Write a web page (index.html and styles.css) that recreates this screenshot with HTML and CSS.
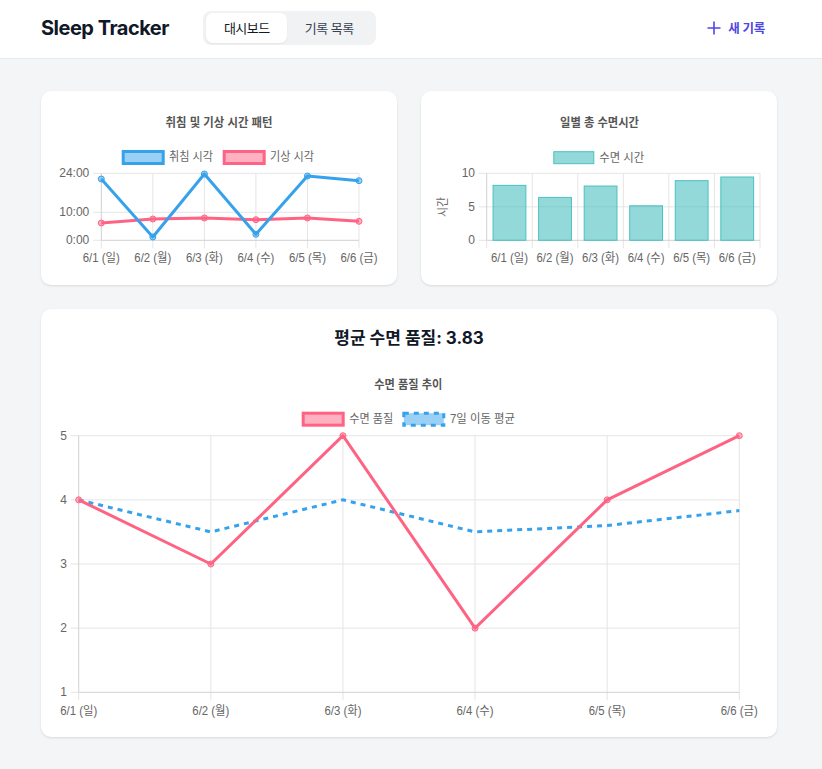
FILE: index.html
```html
<!DOCTYPE html>
<html lang="ko">
<head>
<meta charset="utf-8">
<title>Sleep Tracker</title>
<link rel="stylesheet" href="styles.css">
</head>
<body>
<header class="topbar">
  <div class="topbar-inner">
    <h1 class="brand">Sleep Tracker</h1>
    <nav class="tabs">
      <button class="tab active">대시보드</button>
      <button class="tab">기록 목록</button>
    </nav>
    <button class="new-btn">
      <svg class="plus" width="14" height="14" viewBox="0 0 14 14"><path d="M7 0.5V13.5M0.5 7H13.5" stroke="currentColor" stroke-width="1.6" fill="none"/></svg>
      <span>새 기록</span>
    </button>
  </div>
</header>

<main class="container">
  <div class="chart-row">
    <section class="card small">
      <svg class="chart" width="356" height="194" viewBox="0 0 356 194">
        <text class="ctitle" x="178" y="36" text-anchor="middle" textLength="107" lengthAdjust="spacingAndGlyphs">취침 및 기상 시간 패턴</text>
        <rect x="82.2" y="60.5" width="40" height="12" fill="rgba(54,162,235,0.5)" stroke="rgb(54,162,235)" stroke-width="3"/>
        <text class="lbl" x="128" y="70" textLength="44" lengthAdjust="spacingAndGlyphs">취침 시각</text>
        <rect x="183.2" y="60.5" width="40" height="12" fill="rgba(255,99,132,0.5)" stroke="rgb(255,99,132)" stroke-width="3"/>
        <text class="lbl" x="229" y="70" textLength="44" lengthAdjust="spacingAndGlyphs">기상 시각</text>
        <g class="grid">
          <line x1="52.3" y1="82.3" x2="318" y2="82.3"/>
          <line x1="52.3" y1="121.3" x2="318" y2="121.3"/>
          <line x1="111.84" y1="82.3" x2="111.84" y2="157.3"/>
          <line x1="163.38" y1="82.3" x2="163.38" y2="157.3"/>
          <line x1="214.92" y1="82.3" x2="214.92" y2="157.3"/>
          <line x1="266.46" y1="82.3" x2="266.46" y2="157.3"/>
          <line x1="318" y1="82.3" x2="318" y2="157.3"/>
          <line x1="52.3" y1="149.3" x2="60.3" y2="149.3"/>
          <line x1="60.3" y1="149.3" x2="60.3" y2="157.3"/>
        </g>
        <g class="axis">
          <line x1="60.3" y1="82.3" x2="60.3" y2="149.3"/>
          <line x1="60.3" y1="149.3" x2="318" y2="149.3"/>
        </g>
        <g class="tick" text-anchor="end">
          <text x="48.3" y="86.3">24:00</text>
          <text x="48.3" y="125.3">10:00</text>
          <text x="48.3" y="153.3">0:00</text>
        </g>
        <g class="tick" text-anchor="middle">
          <text x="60.3" y="171" textLength="37" lengthAdjust="spacingAndGlyphs">6/1 (일)</text>
          <text x="111.84" y="171" textLength="37" lengthAdjust="spacingAndGlyphs">6/2 (월)</text>
          <text x="163.38" y="171" textLength="37" lengthAdjust="spacingAndGlyphs">6/3 (화)</text>
          <text x="214.92" y="171" textLength="37" lengthAdjust="spacingAndGlyphs">6/4 (수)</text>
          <text x="266.46" y="171" textLength="37" lengthAdjust="spacingAndGlyphs">6/5 (목)</text>
          <text x="318" y="171" textLength="37" lengthAdjust="spacingAndGlyphs">6/6 (금)</text>
        </g>
        <polyline class="line pink" points="60.3,132 111.84,128 163.38,127 214.92,128.7 266.46,127 318,130.3"/>
        <g class="pts pink-pt">
          <circle cx="60.3" cy="132" r="3"/><circle cx="111.84" cy="128" r="3"/><circle cx="163.38" cy="127" r="3"/>
          <circle cx="214.92" cy="128.7" r="3"/><circle cx="266.46" cy="127" r="3"/><circle cx="318" cy="130.3" r="3"/>
        </g>
        <polyline class="line blue" points="60.3,88 111.84,146 163.38,83 214.92,143.3 266.46,85 318,89.7"/>
        <g class="pts blue-pt">
          <circle cx="60.3" cy="88" r="3"/><circle cx="111.84" cy="146" r="3"/><circle cx="163.38" cy="83" r="3"/>
          <circle cx="214.92" cy="143.3" r="3"/><circle cx="266.46" cy="85" r="3"/><circle cx="318" cy="89.7" r="3"/>
        </g>
      </svg>
    </section>

    <section class="card small">
      <svg class="chart" width="356" height="194" viewBox="0 0 356 194">
        <text class="ctitle" x="178.5" y="36" text-anchor="middle" textLength="79" lengthAdjust="spacingAndGlyphs">일별 총 수면시간</text>
        <rect x="132.8" y="60.7" width="40" height="12" fill="rgba(75,192,192,0.6)" stroke="rgb(75,192,192)" stroke-width="1"/>
        <text class="lbl" x="178.3" y="70.5" textLength="45" lengthAdjust="spacingAndGlyphs">수면 시간</text>
        <g class="grid">
          <line x1="57.7" y1="82.3" x2="339" y2="82.3"/>
          <line x1="57.7" y1="115.8" x2="339" y2="115.8"/>
          <line x1="57.7" y1="149.3" x2="65.7" y2="149.3"/>
          <line x1="65.7" y1="149.3" x2="65.7" y2="157.3"/>
          <line x1="111.25" y1="82.3" x2="111.25" y2="157.3"/>
          <line x1="156.8" y1="82.3" x2="156.8" y2="157.3"/>
          <line x1="202.35" y1="82.3" x2="202.35" y2="157.3"/>
          <line x1="247.9" y1="82.3" x2="247.9" y2="157.3"/>
          <line x1="293.45" y1="82.3" x2="293.45" y2="157.3"/>
          <line x1="339" y1="82.3" x2="339" y2="157.3"/>
        </g>
        <g class="axis">
          <line x1="65.7" y1="82.3" x2="65.7" y2="149.3"/>
          <line x1="65.7" y1="149.3" x2="339" y2="149.3"/>
        </g>
        <g class="tick" text-anchor="end">
          <text x="54" y="86.3">10</text>
          <text x="54" y="119.8">5</text>
          <text x="54" y="153.3">0</text>
        </g>
        <text class="tick" x="0" y="0" text-anchor="middle" transform="translate(26 116) rotate(-90)" textLength="20" lengthAdjust="spacingAndGlyphs">시간</text>
        <g class="bars">
          <rect x="72.08" y="94.36" width="32.8" height="54.94"/>
          <rect x="117.63" y="106.42" width="32.8" height="42.88"/>
          <rect x="163.18" y="95.03" width="32.8" height="54.27"/>
          <rect x="208.73" y="114.8" width="32.8" height="34.5"/>
          <rect x="254.28" y="89.67" width="32.8" height="59.63"/>
          <rect x="299.83" y="86" width="32.8" height="63.3"/>
        </g>
        <g class="tick" text-anchor="middle">
          <text x="88.48" y="171" textLength="37" lengthAdjust="spacingAndGlyphs">6/1 (일)</text>
          <text x="134.03" y="171" textLength="37" lengthAdjust="spacingAndGlyphs">6/2 (월)</text>
          <text x="179.58" y="171" textLength="37" lengthAdjust="spacingAndGlyphs">6/3 (화)</text>
          <text x="225.13" y="171" textLength="37" lengthAdjust="spacingAndGlyphs">6/4 (수)</text>
          <text x="270.68" y="171" textLength="37" lengthAdjust="spacingAndGlyphs">6/5 (목)</text>
          <text x="316.23" y="171" textLength="37" lengthAdjust="spacingAndGlyphs">6/6 (금)</text>
        </g>
      </svg>
    </section>
  </div>

  <section class="card wide">
    <h2 class="avg">평균 수면 품질: 3.83</h2>
    <svg class="chart" width="736" height="386" viewBox="0 0 736 386">
      <text class="ctitle" x="367.3" y="38" text-anchor="middle" textLength="68" lengthAdjust="spacingAndGlyphs">수면 품질 추이</text>
      <rect x="262.2" y="62.2" width="40" height="12" fill="rgba(255,99,132,0.5)" stroke="rgb(255,99,132)" stroke-width="3"/>
      <text class="lbl" x="308.3" y="72" textLength="44" lengthAdjust="spacingAndGlyphs">수면 품질</text>
      <rect x="362.8" y="62.2" width="40" height="12" fill="rgba(54,162,235,0.5)" stroke="rgb(54,162,235)" stroke-width="3" stroke-dasharray="5 5"/>
      <text class="lbl" x="409" y="72" textLength="65" lengthAdjust="spacingAndGlyphs">7일 이동 평균</text>
      <g class="grid">
        <line x1="29.7" y1="84.7" x2="698.3" y2="84.7"/>
        <line x1="29.7" y1="148.85" x2="698.3" y2="148.85"/>
        <line x1="29.7" y1="213" x2="698.3" y2="213"/>
        <line x1="29.7" y1="277.15" x2="698.3" y2="277.15"/>
        <line x1="29.7" y1="341.3" x2="37.7" y2="341.3"/>
        <line x1="37.7" y1="341.3" x2="37.7" y2="349.3"/>
        <line x1="169.82" y1="84.7" x2="169.82" y2="349.3"/>
        <line x1="301.94" y1="84.7" x2="301.94" y2="349.3"/>
        <line x1="434.06" y1="84.7" x2="434.06" y2="349.3"/>
        <line x1="566.18" y1="84.7" x2="566.18" y2="349.3"/>
        <line x1="698.3" y1="84.7" x2="698.3" y2="349.3"/>
      </g>
      <g class="axis">
        <line x1="37.7" y1="84.7" x2="37.7" y2="341.3"/>
        <line x1="37.7" y1="341.3" x2="698.3" y2="341.3"/>
      </g>
      <g class="tick" text-anchor="end">
        <text x="26" y="88.7">5</text>
        <text x="26" y="152.85">4</text>
        <text x="26" y="217">3</text>
        <text x="26" y="281.15">2</text>
        <text x="26" y="345.3">1</text>
      </g>
      <g class="tick" text-anchor="middle">
        <text x="37.7" y="364" textLength="37" lengthAdjust="spacingAndGlyphs">6/1 (일)</text>
        <text x="169.82" y="364" textLength="37" lengthAdjust="spacingAndGlyphs">6/2 (월)</text>
        <text x="301.94" y="364" textLength="37" lengthAdjust="spacingAndGlyphs">6/3 (화)</text>
        <text x="434.06" y="364" textLength="37" lengthAdjust="spacingAndGlyphs">6/4 (수)</text>
        <text x="566.18" y="364" textLength="37" lengthAdjust="spacingAndGlyphs">6/5 (목)</text>
        <text x="698.3" y="364" textLength="37" lengthAdjust="spacingAndGlyphs">6/6 (금)</text>
      </g>
      <polyline class="line blue dashed" points="37.7,148.85 169.82,180.9 301.94,148.85 434.06,180.9 566.18,174.5 698.3,159.6"/>
      <polyline class="line pink" points="37.7,148.85 169.82,213 301.94,84.7 434.06,277.15 566.18,148.85 698.3,84.7"/>
      <g class="pts pink-pt">
        <circle cx="37.7" cy="148.85" r="3"/><circle cx="169.82" cy="213" r="3"/><circle cx="301.94" cy="84.7" r="3"/>
        <circle cx="434.06" cy="277.15" r="3"/><circle cx="566.18" cy="148.85" r="3"/><circle cx="698.3" cy="84.7" r="3"/>
      </g>
    </svg>
  </section>
</main>
</body>
</html>
```

FILE: styles.css
```css
* { box-sizing: border-box; }

html, body {
  margin: 0;
  padding: 0;
}

body {
  background: #f4f5f7;
  font-family: Inter, "Noto Sans CJK KR", sans-serif;
  color: #111827;
}

.topbar {
  background: #ffffff;
  border-bottom: 1px solid #e8e9ec;
  padding-bottom: 3px;
}

.topbar-inner {
  width: 736px;
  margin-left: 41px;
  height: 55px;
  display: flex;
  align-items: center;
}

.brand {
  margin: 0;
  font-size: 20px;
  font-weight: 700;
  letter-spacing: -0.5px;
  color: #111827;
  line-height: 1;
}

.tabs {
  margin-left: 34px;
  display: flex;
  background: #f1f2f4;
  border-radius: 8px;
  padding: 2px 3px 2px 3px;
}

.tab {
  border: 0;
  background: transparent;
  font-family: "Noto Sans CJK KR", sans-serif;
  font-size: 13px;
  letter-spacing: -0.5px;
  color: #374151;
  height: 30px;
  padding: 0 19px 0 18px;
  border-radius: 7px;
  cursor: pointer;
}

.tab.active {
  background: #ffffff;
  color: #111827;
  padding: 0 17px 0 18px;
  box-shadow: 0 1px 2px rgba(0, 0, 0, 0.06);
}

.new-btn {
  margin-left: auto;
  border: 0;
  background: transparent;
  color: #4f46e5;
  display: flex;
  align-items: center;
  gap: 7px;
  padding: 0 12px 0 0;
  font-family: "Noto Sans CJK KR", sans-serif;
  font-size: 12.5px;
  font-weight: 600;
  letter-spacing: -0.3px;
  cursor: pointer;
}

.plus { display: block; }

.container {
  width: 736px;
  margin-left: 41px;
  padding-top: 32px;
  padding-bottom: 32px;
}

.chart-row {
  display: grid;
  grid-template-columns: 356px 356px;
  gap: 24px;
}

.card {
  background: #ffffff;
  border-radius: 10px;
  box-shadow: 0 1px 3px rgba(0, 0, 0, 0.08), 0 1px 2px rgba(0, 0, 0, 0.04);
  overflow: hidden;
}

.card.small { height: 194px; }

.card.wide {
  margin-top: 24px;
  height: 428px;
  padding-top: 16px;
}

.avg {
  margin: 0;
  text-align: center;
  font-size: 17px;
  line-height: 26px;
  font-weight: 700;
  color: #111827;
}

.chart { display: block; }

.chart text {
  font-family: "Liberation Sans", "Noto Sans CJK KR", sans-serif;
  font-size: 12px;
  fill: #666666;
}

.chart .ctitle {
  font-weight: 700;
  fill: #555555;
}

.grid line {
  stroke: #e5e5e5;
  stroke-width: 1;
}

.axis line {
  stroke: #d0d0d0;
  stroke-width: 1;
}

.line {
  fill: none;
  stroke-width: 3;
  stroke-linejoin: round;
}

.line.blue { stroke: rgb(54, 162, 235); }
.line.pink { stroke: rgb(255, 99, 132); }
.line.dashed { stroke-dasharray: 5 5; stroke-linejoin: miter; }

.pts circle { stroke-width: 1; }
.blue-pt circle { fill: rgba(54, 162, 235, 0.5); stroke: rgb(54, 162, 235); }
.pink-pt circle { fill: rgba(255, 99, 132, 0.5); stroke: rgb(255, 99, 132); }

.bars rect {
  fill: rgba(75, 192, 192, 0.6);
  stroke: rgb(75, 192, 192);
  stroke-width: 1;
}
```
